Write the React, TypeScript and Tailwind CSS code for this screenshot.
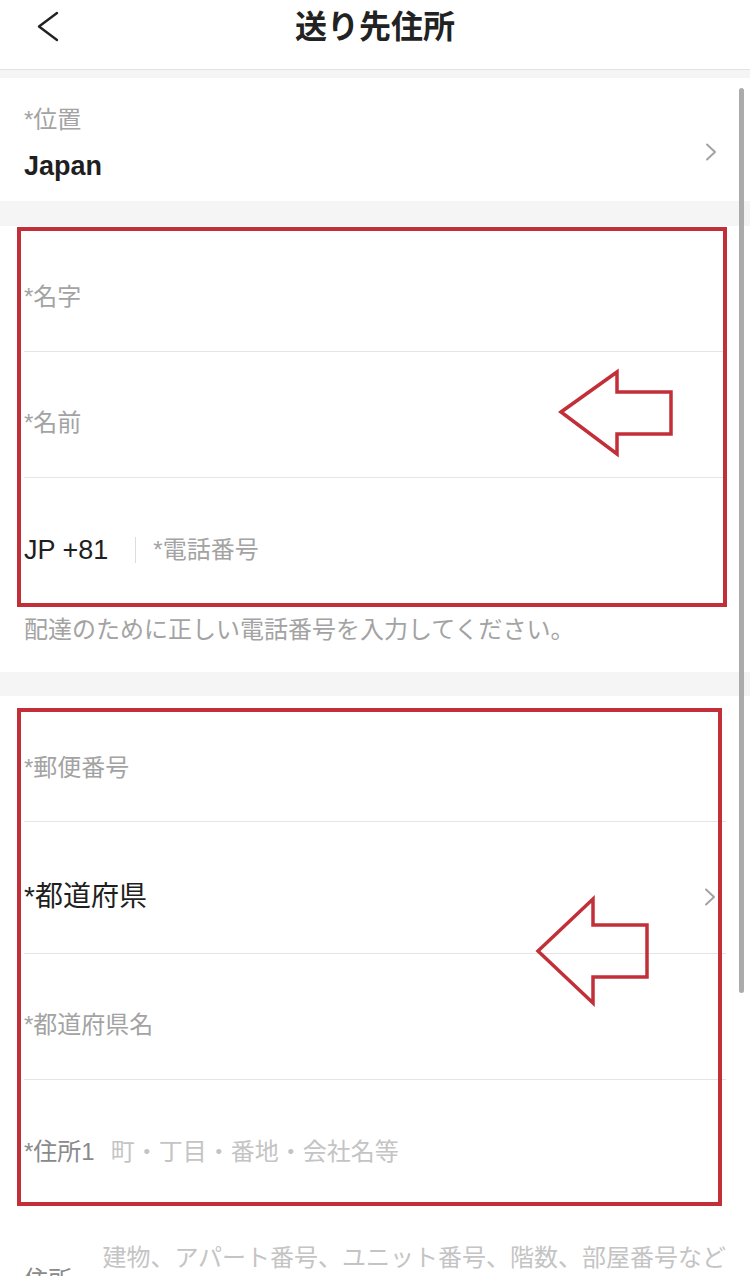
import { ReactNode } from 'react'

const font = "font-['Liberation_Sans','Noto_Sans_CJK_JP',sans-serif]"

function Divider() {
  return <div className="mx-6 h-px bg-[#e4e4e4]" />
}

function Chevron() {
  return (
    <svg width="12" height="18" viewBox="0 0 12 18" fill="none">
      <polyline points="2,1.5 10,9 2,16.5" stroke="#a3a3a3" strokeWidth="2" strokeLinecap="round" strokeLinejoin="round" />
    </svg>
  )
}

function Row({ h, pt, children }: { h: string; pt: string; children: ReactNode }) {
  return <div className={`flex items-center px-6 ${h} ${pt}`}>{children}</div>
}

export default function App() {
  return (
    <div className={`relative h-[1276px] overflow-hidden bg-[#f5f5f5] ${font}`}>
      {/* header */}
      <div className="h-[70px] border-b border-[#e2e2e2] bg-white">
        <div className="grid h-[54px] grid-cols-[1fr_auto_1fr] items-center">
          <div className="pl-[36px]">
            <svg width="24" height="32" viewBox="0 0 24 32" fill="none">
              <polyline points="21,2 3,15.5 21,29" stroke="#222" strokeWidth="2.4" strokeLinecap="round" strokeLinejoin="round" />
            </svg>
          </div>
          <div className="text-[32px] font-bold leading-[40px] text-[#222]">送り先住所</div>
          <div />
        </div>
      </div>

      {/* location */}
      <div className="mt-2 flex h-[123px] justify-between bg-white px-6 pt-[28px]">
        <div>
          <div className="text-[24px] leading-[28px] text-[#a3a3a3]">*位置</div>
          <div className="mt-[16px] text-[27px] font-bold leading-[32px] text-[#1f1f1f]">Japan</div>
        </div>
        <div className="mr-[9px] mt-[37px]">
          <Chevron />
        </div>
      </div>

      {/* name + phone */}
      <div className="mt-[25px] bg-white">
        <Row h="h-[125px]" pt="pt-[17px]">
          <span className="text-[24px] leading-[32px] text-[#a3a3a3]">*名字</span>
        </Row>
        <Divider />
        <Row h="h-[125px]" pt="pt-[17px]">
          <span className="text-[24px] leading-[32px] text-[#a3a3a3]">*名前</span>
        </Row>
        <Divider />
        <Row h="h-[126px]" pt="pt-[18px]">
          <span className="text-[27px] leading-[32px] text-[#1f1f1f]">JP +81</span>
          <span className="ml-[27px] h-[26px] w-px bg-[#dcdcdc]" />
          <span className="ml-[17px] text-[24px] leading-[32px] text-[#a3a3a3]">*電話番号</span>
        </Row>
        <div className="h-[68px] px-6 pt-[12px] text-[24px] leading-[28px] text-[#a3a3a3]">
          配達のために正しい電話番号を入力してください。
        </div>
      </div>

      {/* address */}
      <div className="mt-[24px] bg-white">
        <Row h="h-[125px]" pt="pt-[19px]">
          <span className="text-[24px] leading-[32px] text-[#a3a3a3]">*郵便番号</span>
        </Row>
        <Divider />
        <Row h="h-[131px]" pt="pt-[19px]">
          <span className="flex-1 text-[28px] leading-[36px] text-[#1f1f1f]">*都道府県</span>
          <span className="mr-[10px]">
            <Chevron />
          </span>
        </Row>
        <Divider />
        <Row h="h-[125px]" pt="pt-[17px]">
          <span className="text-[24px] leading-[32px] text-[#a3a3a3]">*都道府県名</span>
        </Row>
        <Divider />
        <Row h="h-[126px]" pt="pt-[17px]">
          <span className="text-[24px] leading-[32px] text-[#8a8a8a]">*住所1</span>
          <span className="ml-[16px] text-[24px] leading-[32px] text-[#c4c4c4]">町・丁目・番地・会社名等</span>
        </Row>
        <div className="flex h-[120px] items-start px-6">
          <span className="mt-[58px] text-[24px] leading-[32px] text-[#8a8a8a]">住所2</span>
          <span className="ml-[18px] mt-[36px] whitespace-nowrap text-[24px] leading-[32px] text-[#c4c4c4]">
            建物、アパート番号、ユニット番号、階数、部屋番号など
          </span>
        </div>
      </div>

      {/* scrollbar */}
      <div className="absolute left-[739px] top-[88px] h-[905px] w-[5px] rounded-full bg-[#ababab]" />

      {/* red annotations */}
      <svg className="pointer-events-none absolute left-0 top-0" width="750" height="1276" viewBox="0 0 750 1276" fill="none">
        <rect x="19" y="229" width="706" height="376" stroke="#c22f38" strokeWidth="4" />
        <rect x="19" y="710" width="701" height="494" stroke="#c22f38" strokeWidth="4" />
        <polygon points="561,412 617,372 617,392 671,392 671,434 617,434 617,454" stroke="#c22f38" strokeWidth="3.5" strokeLinejoin="miter" />
        <polygon points="538,951 593,899 593,925 647,925 647,977 593,977 593,1003" stroke="#c22f38" strokeWidth="3.5" strokeLinejoin="miter" />
      </svg>
    </div>
  )
}
